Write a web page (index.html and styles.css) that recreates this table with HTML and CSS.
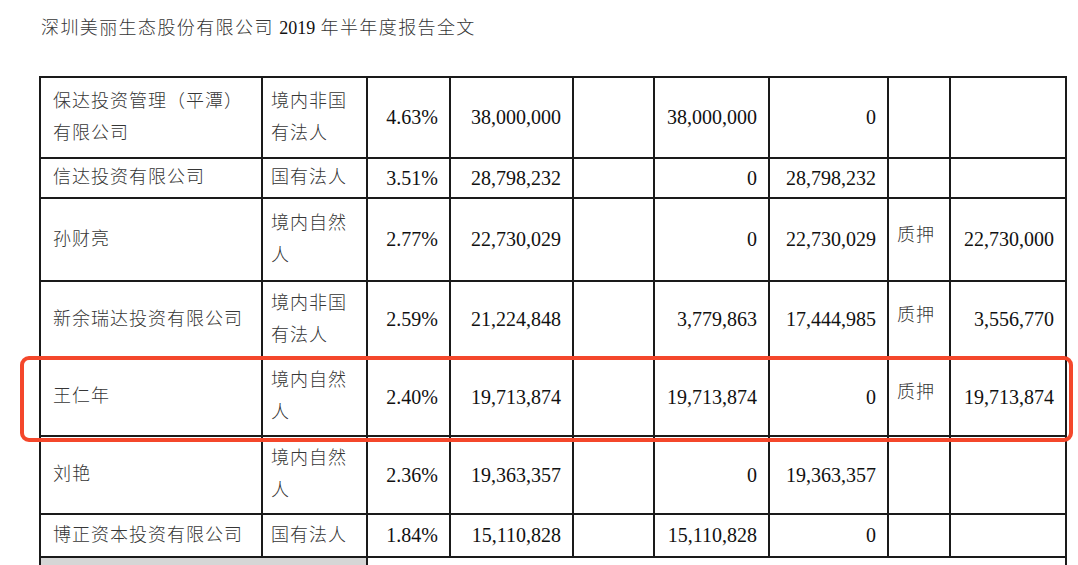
FILE: index.html
```html
<!DOCTYPE html>
<html lang="zh-CN">
<head>
<meta charset="utf-8">
<title>深圳美丽生态股份有限公司 2019 年半年度报告全文</title>
<link rel="stylesheet" href="styles.css">
</head>
<body>
<div class="page">
  <h1 class="title">深圳美丽生态股份有限公司 <span class="latin">2019</span> 年半年度报告全文</h1>

  <div class="sheet" role="table">
    <div class="c name">保达投资管理（平潭）<br>有限公司</div>
    <div class="c kind">境内非国<br>有法人</div>
    <div class="c num">4.63%</div>
    <div class="c num">38,000,000</div>
    <div class="c num"></div>
    <div class="c num">38,000,000</div>
    <div class="c num">0</div>
    <div class="c kind"></div>
    <div class="c num"></div>

    <div class="c name">信达投资有限公司</div>
    <div class="c kind">国有法人</div>
    <div class="c num">3.51%</div>
    <div class="c num">28,798,232</div>
    <div class="c num"></div>
    <div class="c num">0</div>
    <div class="c num">28,798,232</div>
    <div class="c kind"></div>
    <div class="c num"></div>

    <div class="c name">孙财亮</div>
    <div class="c kind">境内自然<br>人</div>
    <div class="c num">2.77%</div>
    <div class="c num">22,730,029</div>
    <div class="c num"></div>
    <div class="c num">0</div>
    <div class="c num">22,730,029</div>
    <div class="c kind pledge">质押</div>
    <div class="c num">22,730,000</div>

    <div class="c name">新余瑞达投资有限公司</div>
    <div class="c kind">境内非国<br>有法人</div>
    <div class="c num">2.59%</div>
    <div class="c num">21,224,848</div>
    <div class="c num"></div>
    <div class="c num">3,779,863</div>
    <div class="c num">17,444,985</div>
    <div class="c kind pledge">质押</div>
    <div class="c num">3,556,770</div>

    <div class="c name">王仁年</div>
    <div class="c kind">境内自然<br>人</div>
    <div class="c num">2.40%</div>
    <div class="c num">19,713,874</div>
    <div class="c num"></div>
    <div class="c num">19,713,874</div>
    <div class="c num">0</div>
    <div class="c kind pledge">质押</div>
    <div class="c num">19,713,874</div>

    <div class="c name">刘艳</div>
    <div class="c kind">境内自然<br>人</div>
    <div class="c num">2.36%</div>
    <div class="c num">19,363,357</div>
    <div class="c num"></div>
    <div class="c num">0</div>
    <div class="c num">19,363,357</div>
    <div class="c kind"></div>
    <div class="c num"></div>

    <div class="c name">博正资本投资有限公司</div>
    <div class="c kind">国有法人</div>
    <div class="c num">1.84%</div>
    <div class="c num">15,110,828</div>
    <div class="c num"></div>
    <div class="c num">15,110,828</div>
    <div class="c num">0</div>
    <div class="c kind"></div>
    <div class="c num"></div>

    <div class="c shade"></div>
    <div class="c rest"></div>

    <div class="highlight" aria-hidden="true"></div>
  </div>
</div>
</body>
</html>
```

FILE: styles.css
```css
html, body {
  margin: 0;
  padding: 0;
  background: #ffffff;
}

body {
  width: 1078px;
  height: 565px;
  overflow: hidden;
}

.page {
  padding-left: 39px;
}

.title {
  margin: 0 0 37px 2px;
  padding-top: 13px;
  height: 26px;
  line-height: 26px;
  font-family: "Noto Sans CJK SC", "Noto Sans", sans-serif;
  font-weight: 300;
  font-size: 18px;
  letter-spacing: 1.4px;
  color: #363636;
  white-space: nowrap;
}

.title .latin {
  font-family: "Liberation Serif", serif;
  font-weight: 400;
  letter-spacing: 0;
  color: #111;
}

.sheet {
  position: relative;
  display: grid;
  grid-template-columns: 222px 105px 83px 123px 81px 115px 119px 62px 116px;
  grid-template-rows: 81px 40px 83px 77px 78px 78px 43px 20px;
  width: max-content;
  border-top: 2px solid #1a1a1a;
  border-left: 2px solid #1a1a1a;
}

.c {
  box-sizing: border-box;
  border-right: 2px solid #1a1a1a;
  border-bottom: 2px solid #1a1a1a;
  display: flex;
  align-items: center;
  min-width: 0;
}

.name,
.kind {
  padding-bottom: 6px;
  font-family: "Noto Sans CJK SC", "Noto Sans", sans-serif;
  font-weight: 300;
  font-size: 18px;
  letter-spacing: 1px;
  line-height: 32px;
  color: #363636;
  white-space: nowrap;
}

.name {
  padding-left: 12px;
}

.kind {
  padding-left: 8px;
}

.kind.pledge {
  padding-bottom: 14px;
}

.num {
  justify-content: flex-end;
  padding-right: 11px;
  font-family: "Liberation Serif", serif;
  font-size: 20px;
  color: #111;
  white-space: nowrap;
}

.shade {
  grid-column: 1 / span 2;
  background: #d6d6d6;
  border-bottom: none;
}

.rest {
  grid-column: 3 / span 7;
  border-bottom: none;
}

.highlight {
  position: absolute;
  left: -21px;
  top: 278px;
  width: 1053px;
  height: 86px;
  box-sizing: border-box;
  border: 4px solid #f4472b;
  border-radius: 9px;
  pointer-events: none;
}
```
